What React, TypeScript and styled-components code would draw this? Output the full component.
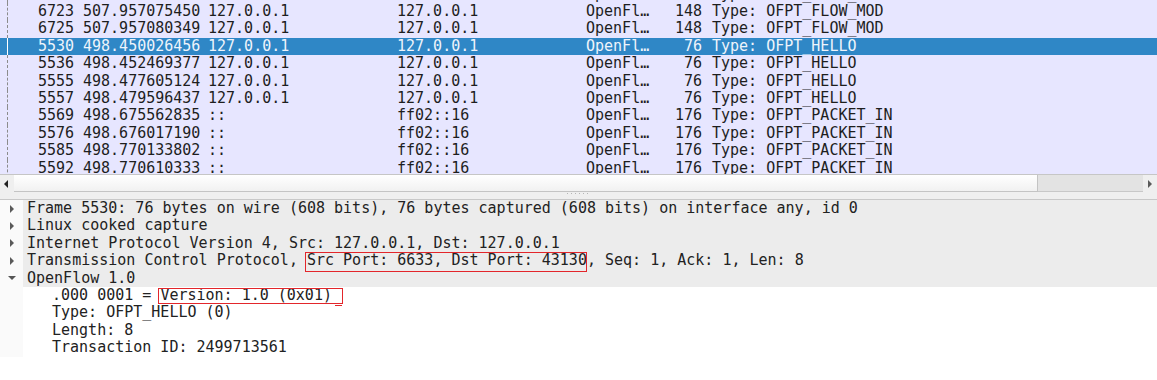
import styled, { createGlobalStyle } from "styled-components";

const GlobalStyle = createGlobalStyle`
  html, body {
    margin: 0;
    padding: 0;
    background: #ffffff;
  }
  body {
    font-family: "DejaVu Sans Mono", "Liberation Mono", monospace;
    font-size: 15px;
    color: #202020;
  }
`;

const ROW_H = 17.4;

const Window = styled.div`
  width: 1157px;
  height: 380px;
  display: flex;
  flex-direction: column;
  overflow: hidden;
  background: #ffffff;
`;

// ---- packet list ----
const PacketList = styled.div`
  height: 174px;
  overflow: hidden;
  background: #e7e6ff;
  flex: none;
`;

const Rows = styled.div`
  margin-top: -14.4px;
`;

const PacketRow = styled.div<{ $selected?: boolean }>`
  position: relative;
  display: grid;
  grid-template-columns: 78px 127px 189px 189px 80px 43px 1fr;
  height: ${ROW_H}px;
  line-height: ${ROW_H}px;
  white-space: pre;
  background: ${(p) => (p.$selected ? "#2f87c6" : "#e7e6ff")};
  color: ${(p) => (p.$selected ? "#eef4fb" : "#1e1e1e")};
`;

const Cell = styled.span<{ $right?: boolean; $pad?: number }>`
  overflow: hidden;
  text-align: ${(p) => (p.$right ? "right" : "left")};
  padding: ${(p) => (p.$right ? "0 4px 0 0" : `0 0 0 ${p.$pad ?? 3}px`)};
`;

const RelatedMark = styled.span<{ $selected?: boolean }>`
  position: absolute;
  left: 7px;
  top: 0;
  bottom: 0;
  border-left: 1px ${(p) => (p.$selected ? "solid #ffffff" : "dashed #8c8c8c")};
`;

// ---- horizontal scrollbar ----
const HScroll = styled.div`
  height: 18px;
  flex: none;
  display: flex;
  align-items: stretch;
  background: #e4e4e4;
  border-top: 1px solid #c6c6c6;
  box-sizing: border-box;
`;

const ArrowButton = styled.div`
  width: 14px;
  flex: none;
  display: flex;
  align-items: center;
  justify-content: center;
  background: #efefef;
`;

const Thumb = styled.div`
  width: 1024px;
  flex: none;
  background: linear-gradient(#ffffff, #f1f1f1);
  border-right: 1px solid #c4c4c4;
  border-bottom: 1px solid #c4c4c4;
  box-sizing: border-box;
`;

const Track = styled.div`
  flex: 1;
  background: #e3e3e3;
  border-bottom: 1px solid #c8c8c8;
`;

// ---- splitter ----
const Splitter = styled.div`
  height: 8px;
  flex: none;
  background: #efefef;
  border-bottom: 1px solid #c8c8c8;
  display: flex;
  justify-content: center;
  align-items: flex-start;
  box-sizing: border-box;
`;

const Grip = styled.div`
  margin-top: 1px;
  width: 24px;
  height: 1px;
  background: repeating-linear-gradient(90deg, #b5b5b5 0 1px, transparent 1px 4px);
`;

// ---- detail tree ----
const Tree = styled.div`
  flex: 1;
  background: #ffffff;
`;

const TreeRow = styled.div`
  display: flex;
  height: ${ROW_H}px;
  line-height: ${ROW_H}px;
  white-space: pre;
`;

const Branch = styled.div`
  width: 23px;
  flex: none;
  display: flex;
  align-items: center;
  justify-content: center;
  background: #fafafa;
`;

const Label = styled.div<{ $depth: number; $shaded?: boolean }>`
  flex: 1;
  padding-left: ${(p) => 4 + p.$depth * 25}px;
  background: ${(p) => (p.$shaded ? "#ececec" : "#ffffff")};
  color: #222222;
`;

const Boxed = styled.span<{ $extra?: number }>`
  position: relative;
  display: inline-block;
  &::after {
    content: "";
    position: absolute;
    top: 0;
    bottom: -2px;
    left: -2px;
    right: ${(p) => -(p.$extra ?? 0)}px;
    border: 1px solid #e3262b;
  }
`;

const BoxedTail = styled(Boxed)`
  &::after {
    top: 1px;
    bottom: 0;
  }
  &::before {
    content: "";
    position: absolute;
    right: -10px;
    bottom: -2px;
    width: 7px;
    height: 1px;
    background: #e3262b;
  }
`;

const Tri = ({ dir }: { dir: "left" | "right" | "down" }) => {
  const d =
    dir === "left" ? "M6 1 L2 5 L6 9 Z" : dir === "right" ? "M3 1 L7 5 L3 9 Z" : "M1 3 L9 3 L5 7 Z";
  return (
    <svg width="10" height="10" viewBox="0 0 10 10">
      <path d={d} fill={dir === "down" ? "#555" : dir === "right" ? "#5a5a5a" : "#222"} />
    </svg>
  );
};

type Pkt = { no: string; time: string; src: string; dst: string; len: string; info: string };

const flow = (no: string, time: string): Pkt => ({
  no, time, src: "127.0.0.1", dst: "127.0.0.1", len: "148", info: "Type: OFPT_FLOW_MOD",
});
const hello = (no: string, time: string): Pkt => ({
  no, time, src: "127.0.0.1", dst: "127.0.0.1", len: "76", info: "Type: OFPT_HELLO",
});
const pin = (no: string, time: string): Pkt => ({
  no, time, src: "::", dst: "ff02::16", len: "176", info: "Type: OFPT_PACKET_IN",
});

const packets: Pkt[] = [
  flow("6719", "507.956931808"),
  flow("6723", "507.957075450"),
  flow("6725", "507.957080349"),
  hello("5530", "498.450026456"),
  hello("5536", "498.452469377"),
  hello("5555", "498.477605124"),
  hello("5557", "498.479596437"),
  pin("5569", "498.675562835"),
  pin("5576", "498.676017190"),
  pin("5585", "498.770133802"),
  pin("5592", "498.770610333"),
];

export default function App() {
  return (
    <Window>
      <GlobalStyle />
      <PacketList>
        <Rows>
          {packets.map((p) => {
            const sel = p.no === "5530";
            return (
              <PacketRow key={p.no} $selected={sel}>
                <RelatedMark $selected={sel} />
                <Cell $right>{p.no}</Cell>
                <Cell $pad={5}>{p.time}</Cell>
                <Cell>{p.src}</Cell>
                <Cell>{p.dst}</Cell>
                <Cell>OpenFl…</Cell>
                <Cell $right>{p.len}</Cell>
                <Cell $pad={6}>{p.info}</Cell>
              </PacketRow>
            );
          })}
        </Rows>
      </PacketList>

      <HScroll>
        <ArrowButton>
          <Tri dir="left" />
        </ArrowButton>
        <Thumb />
        <Track />
        <ArrowButton>
          <Tri dir="right" />
        </ArrowButton>
      </HScroll>

      <Splitter>
        <Grip />
      </Splitter>

      <Tree>
        <TreeRow>
          <Branch><Tri dir="right" /></Branch>
          <Label $depth={0} $shaded>
            Frame 5530: 76 bytes on wire (608 bits), 76 bytes captured (608 bits) on interface any, id 0
          </Label>
        </TreeRow>
        <TreeRow>
          <Branch><Tri dir="right" /></Branch>
          <Label $depth={0} $shaded>Linux cooked capture</Label>
        </TreeRow>
        <TreeRow>
          <Branch><Tri dir="right" /></Branch>
          <Label $depth={0} $shaded>Internet Protocol Version 4, Src: 127.0.0.1, Dst: 127.0.0.1</Label>
        </TreeRow>
        <TreeRow>
          <Branch><Tri dir="right" /></Branch>
          <Label $depth={0} $shaded>
            Transmission Control Protocol, <Boxed>Src Port: 6633, Dst Port: 43130</Boxed>, Seq: 1, Ack: 1, Len: 8
          </Label>
        </TreeRow>
        <TreeRow>
          <Branch><Tri dir="down" /></Branch>
          <Label $depth={0} $shaded>OpenFlow 1.0</Label>
        </TreeRow>
        <TreeRow>
          <Branch />
          <Label $depth={1}>
            .000 0001 = <BoxedTail $extra={11}>Version: 1.0 (0x01)</BoxedTail>
          </Label>
        </TreeRow>
        <TreeRow>
          <Branch />
          <Label $depth={1}>Type: OFPT_HELLO (0)</Label>
        </TreeRow>
        <TreeRow>
          <Branch />
          <Label $depth={1}>Length: 8</Label>
        </TreeRow>
        <TreeRow>
          <Branch />
          <Label $depth={1}>Transaction ID: 2499713561</Label>
        </TreeRow>
      </Tree>
    </Window>
  );
}
